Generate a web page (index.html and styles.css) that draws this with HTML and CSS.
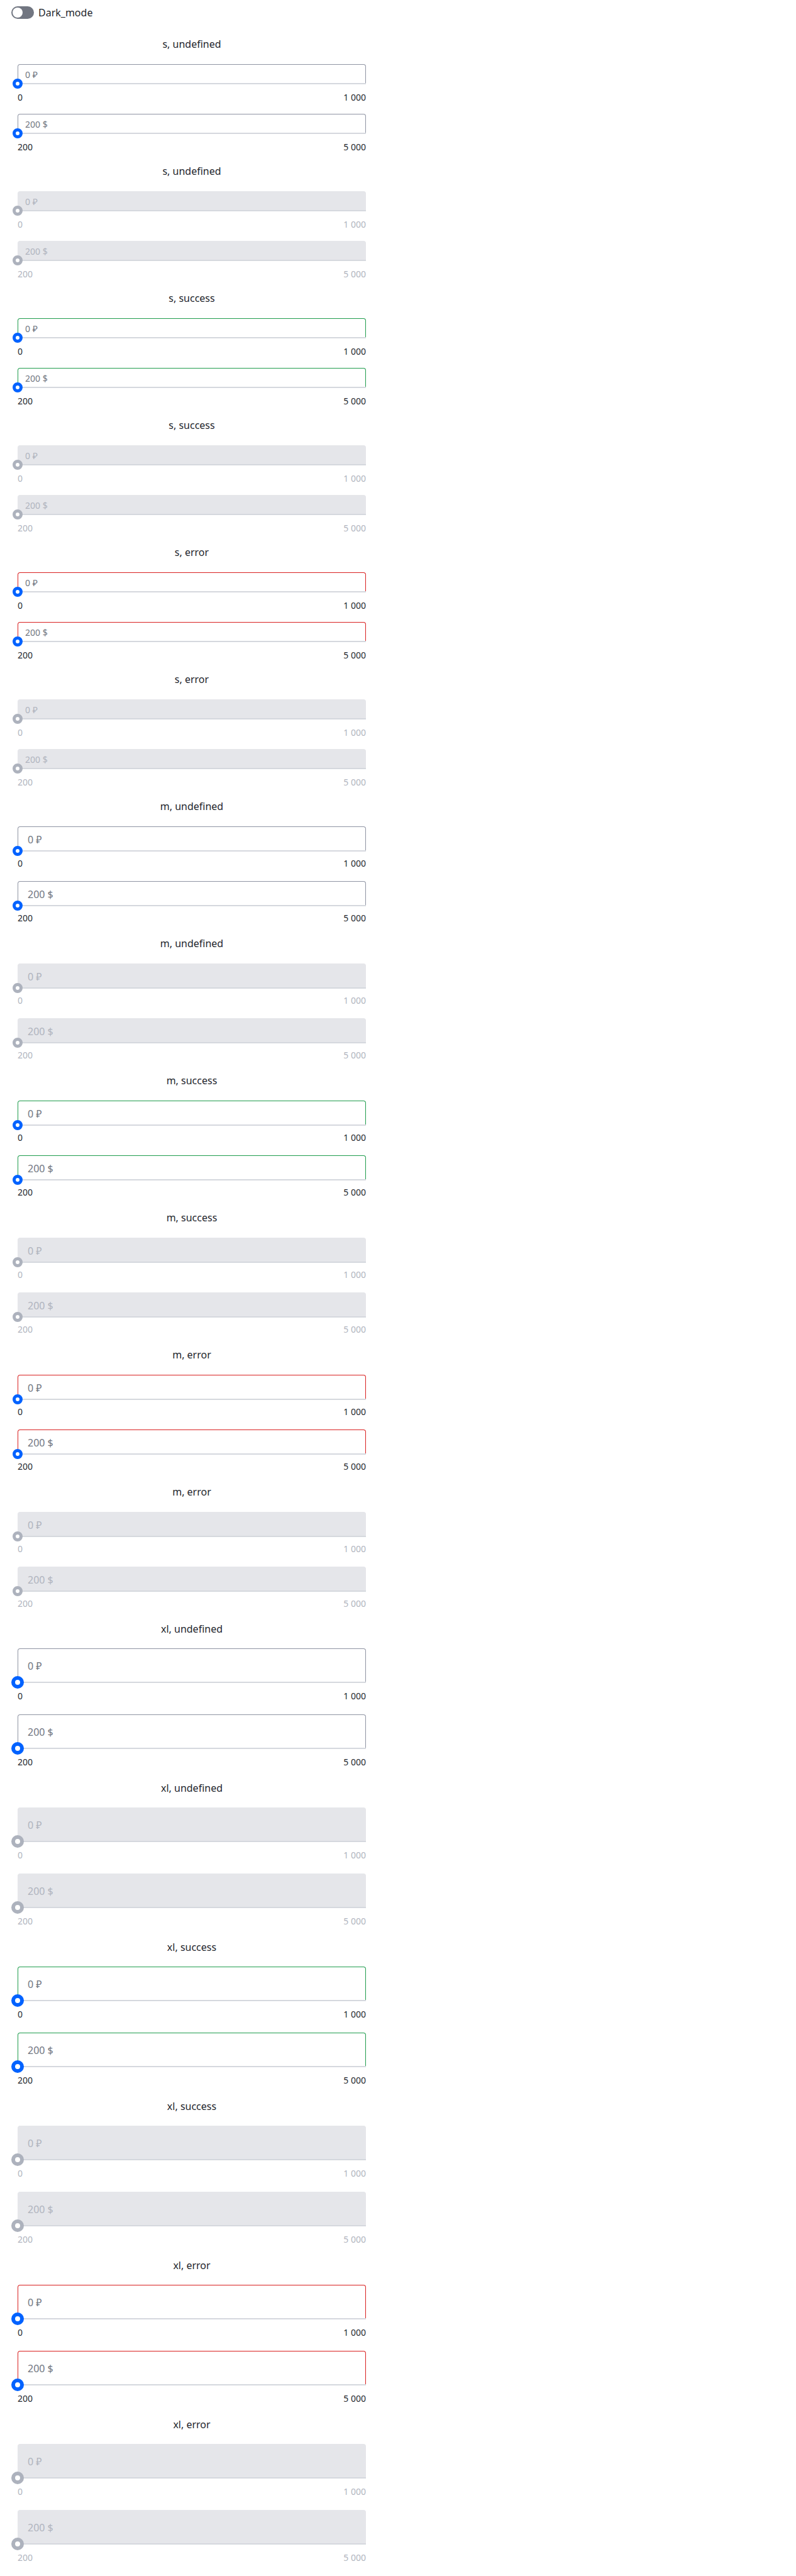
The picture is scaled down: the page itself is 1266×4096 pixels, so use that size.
FILE: index.html
```html
<!DOCTYPE html>
<html lang="en">
<head>
<meta charset="utf-8">
<title>Slider input</title>
<link rel="stylesheet" href="styles.css">
</head>
<body>
<label class="mode"><input class="toggle" type="checkbox">Dark_mode</label>
<main class="list" id="list"></main>
<script src="script.js"></script>
</body>
</html>
```
FILE: styles.css
```css
* {
  box-sizing: border-box;
}

body {
  margin: 0;
  background: #fff;
  color: #23262d;
  font-family: "Noto Sans", sans-serif;
  font-size: 16px;
  line-height: 24px;
}

.mode {
  display: flex;
  align-items: center;
  gap: 7px;
  padding: 8px 18px 26px;
}

.toggle {
  appearance: none;
  flex: none;
  width: 36px;
  height: 20px;
  margin: 0;
  padding: 2px;
  border-radius: 10px;
  background: #717681;
}

.toggle::before {
  content: "";
  display: block;
  width: 16px;
  height: 16px;
  border-radius: 50%;
  background: #fff;
}

.toggle:checked {
  padding-left: 18px;
  background: #0062ff;
}

.list {
  max-width: 610px;
  padding: 0 28px;
}

.title {
  margin: 0 0 20px;
  font-size: 16px;
  font-weight: 400;
  text-align: center;
}

.field {
  --thumb: 16px;
  --ring: 5px;
  --accent: #0062ff;
  display: flex;
  flex-direction: column;
}

.value {
  width: 100%;
  margin: 0;
  border: 1px solid #8f94a3;
  border-bottom: 0;
  border-radius: 4px 4px 0 0;
  background: #fff;
  color: #717681;
  font-family: inherit;
  outline: none;
}

.range {
  appearance: none;
  width: calc(100% + var(--thumb));
  height: var(--thumb);
  margin: calc(var(--thumb) / -2 - 1px) calc(var(--thumb) / -2) 0;
  background: linear-gradient(#d5d8de, #d5d8de) center / calc(100% - var(--thumb)) 2px no-repeat;
}

.range::-webkit-slider-thumb {
  appearance: none;
  width: var(--thumb);
  height: var(--thumb);
  border: var(--ring) solid var(--accent);
  border-radius: 50%;
  background: #fff;
}

.limits {
  display: flex;
  justify-content: space-between;
  font-size: 14px;
  line-height: 20px;
}

.s .value {
  height: 32px;
  padding: 0 11px;
  font-size: 14px;
}

.s .limits {
  margin: 4px 0 16px;
}

.m .value {
  height: 40px;
  padding: 0 15px;
  font-size: 16px;
}

.m .limits {
  margin: 2px 0 18px;
}

.xl .title {
  margin-bottom: 19px;
}

.xl .field {
  --thumb: 20px;
  --ring: 6px;
}

.xl .value {
  height: 55px;
  padding: 0 15px;
  font-size: 16px;
}

.xl .limits {
  margin: 2px 0 19px;
}

.success .value {
  border-color: #1f9c4d;
}

.error .value {
  border-color: #d92020;
}

.disabled .field {
  --accent: #adb2bd;
}

.disabled .value {
  border-color: #e5e6ea;
  background: #e5e6ea;
  color: #b0b4be;
}

.disabled .limits {
  color: #b0b4be;
}
```
FILE: script.js
```js
const sizes = ["s", "m", "xl"];
const statuses = ["undefined", "success", "error"];
const fields = [
  { value: "0 ₽", min: 0, max: 1000, from: "0", to: "1 000" },
  { value: "200 $", min: 200, max: 5000, from: "200", to: "5 000" },
];

const fieldMarkup = (field, name, off) => `
  <div class="field">
    <input class="value" type="text" value="${field.value}" aria-label="${name} value" ${off}>
    <input class="range" type="range" min="${field.min}" max="${field.max}" value="${field.min}" aria-label="${name} slider" ${off}>
    <div class="limits"><span>${field.from}</span><span>${field.to}</span></div>
  </div>`;

const sectionMarkup = (size, status, disabled) => {
  const name = `${size}, ${status}`;
  const off = disabled ? "disabled" : "";
  return `
    <section class="${size} ${status} ${off}">
      <h2 class="title">${name}</h2>
      ${fields.map((field) => fieldMarkup(field, name, off)).join("")}
    </section>`;
};

document.getElementById("list").innerHTML = sizes
  .flatMap((size) => statuses.flatMap((status) => [false, true].map((disabled) => sectionMarkup(size, status, disabled))))
  .join("");
```
